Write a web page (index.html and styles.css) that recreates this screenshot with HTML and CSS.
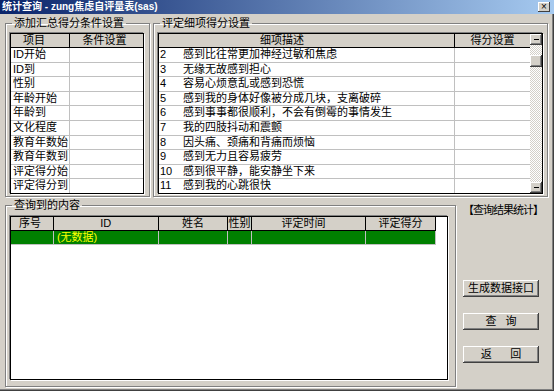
FILE: index.html
```html
<!DOCTYPE html>
<html>
<head>
  <meta charset="UTF-8">
  <link rel="stylesheet" href="styles.css">
</head>
<body>
  <div class="window">
    <div class="titlebar">
      <span class="title">统计查询 - zung焦虑自评量表(sas)</span>
      <span class="close-btn">×</span>
    </div>

    <div class="client">
      <div class="top-row">
        <!-- 汇总得分条件 -->
        <fieldset class="group group-cond">
          <legend>添加汇总得分条件设置</legend>
          <div class="frame">
            <div class="head">
              <div class="hc cond-item">项目</div>
              <div class="hc cond-set">条件设置</div>
            </div>
            <div class="row"><div class="cell cond-item">ID开始</div><div class="cell cond-set"></div></div>
            <div class="row"><div class="cell cond-item">ID到</div><div class="cell cond-set"></div></div>
            <div class="row"><div class="cell cond-item">性别</div><div class="cell cond-set"></div></div>
            <div class="row"><div class="cell cond-item">年龄开始</div><div class="cell cond-set"></div></div>
            <div class="row"><div class="cell cond-item">年龄到</div><div class="cell cond-set"></div></div>
            <div class="row"><div class="cell cond-item">文化程度</div><div class="cell cond-set"></div></div>
            <div class="row"><div class="cell cond-item">教育年数始</div><div class="cell cond-set"></div></div>
            <div class="row"><div class="cell cond-item">教育年数到</div><div class="cell cond-set"></div></div>
            <div class="row"><div class="cell cond-item">评定得分始</div><div class="cell cond-set"></div></div>
            <div class="row"><div class="cell cond-item">评定得分到</div><div class="cell cond-set"></div></div>
          </div>
        </fieldset>

        <!-- 细项得分 -->
        <fieldset class="group group-items">
          <legend>评定细项得分设置</legend>
          <div class="frame frame-items">
            <div class="items-body">
              <div class="head">
                <div class="hc item-desc">细项描述</div>
                <div class="hc item-score">得分设置</div>
              </div>
              <div class="row"><div class="cell item-desc"><span class="no">2</span>感到比往常更加神经过敏和焦虑</div><div class="cell item-score"></div></div>
              <div class="row"><div class="cell item-desc"><span class="no">3</span>无缘无故感到担心</div><div class="cell item-score"></div></div>
              <div class="row"><div class="cell item-desc"><span class="no">4</span>容易心烦意乱或感到恐慌</div><div class="cell item-score"></div></div>
              <div class="row"><div class="cell item-desc"><span class="no">5</span>感到我的身体好像被分成几块，支离破碎</div><div class="cell item-score"></div></div>
              <div class="row"><div class="cell item-desc"><span class="no">6</span>感到事事都很顺利，不会有倒霉的事情发生</div><div class="cell item-score"></div></div>
              <div class="row"><div class="cell item-desc"><span class="no">7</span>我的四肢抖动和震颤</div><div class="cell item-score"></div></div>
              <div class="row"><div class="cell item-desc"><span class="no">8</span>因头痛、颈痛和背痛而烦恼</div><div class="cell item-score"></div></div>
              <div class="row"><div class="cell item-desc"><span class="no">9</span>感到无力且容易疲劳</div><div class="cell item-score"></div></div>
              <div class="row"><div class="cell item-desc"><span class="no">10</span>感到很平静，能安静坐下来</div><div class="cell item-score"></div></div>
              <div class="row"><div class="cell item-desc"><span class="no">11</span>感到我的心跳很快</div><div class="cell item-score"></div></div>
            </div>
            <div class="vscroll">
              <div class="sb-btn"><span class="sb-mark"></span></div>
              <div class="sb-track"><div class="sb-thumb"></div></div>
              <div class="sb-btn"><span class="sb-mark"></span></div>
            </div>
          </div>
        </fieldset>
      </div>

      <div class="bottom-row">
        <!-- 查询结果 -->
        <fieldset class="group group-result">
          <legend>查询到的内容</legend>
          <div class="frame frame-result">
            <div class="head">
              <div class="hc r-no">序号</div>
              <div class="hc r-id">ID</div>
              <div class="hc r-name">姓名</div>
              <div class="hc r-sex">性别</div>
              <div class="hc r-time">评定时间</div>
              <div class="hc r-score">评定得分</div>
            </div>
            <div class="row row-empty">
              <div class="cell r-no"></div>
              <div class="cell r-id">(无数据)</div>
              <div class="cell r-name"></div>
              <div class="cell r-sex"></div>
              <div class="cell r-time"></div>
              <div class="cell r-score"></div>
            </div>
          </div>
        </fieldset>

        <div class="side">
          <div class="side-title">【查询结果统计】</div>
          <div class="side-buttons">
            <button class="btn">生成数据接口</button>
            <button class="btn">查&nbsp;&nbsp;&nbsp;询</button>
            <button class="btn">返&nbsp;&nbsp;&nbsp;&nbsp;&nbsp;&nbsp;回</button>
          </div>
        </div>
      </div>
    </div>
  </div>
</body>
</html>
```

FILE: styles.css
```css
/* 经典 Windows 窗口配色 */
:root {
  --face: #d4d0c8;
  --shadow: #808080;
  --dark: #404040;
  --grid: #c0c0c0;
}

body {
  margin: 0;
  background: var(--face);
  font-family: "Liberation Sans", "Noto Sans CJK SC", sans-serif;
  font-size: 11px;
  color: #000;
}

.window {
  width: 554px;
  height: 391px;
  background: var(--face);
  box-sizing: border-box;
  box-shadow: inset -1px -1px 0 var(--dark), inset -2px -2px 0 var(--shadow);
  overflow: hidden;
}

.titlebar {
  height: 14px;
  display: flex;
  align-items: center;
  justify-content: space-between;
  padding: 0 4px 0 2px;
  background: linear-gradient(to right, #0a246a, #a6caf0);
}

.title {
  color: #fff;
  font-size: 10px;
  font-weight: bold;
  line-height: 14px;
  white-space: nowrap;
}

.close-btn {
  width: 12px;
  height: 10px;
  display: flex;
  align-items: center;
  justify-content: center;
  background: var(--face);
  font-size: 10px;
  line-height: 10px;
  box-shadow: inset -1px -1px 0 var(--dark), inset 1px 1px 0 #fff;
}

.client {
  padding: 2px 6px 0 5px;
}

.top-row {
  display: flex;
  gap: 3px;
  height: 181px;
}

.bottom-row {
  display: flex;
  margin-top: 1px;
}

/* 分组框 */
.group {
  margin: 0;
  min-width: 0;
  box-sizing: border-box;
  border: 1px solid var(--shadow);
  box-shadow: 1px 1px 0 #fff, inset 1px 1px 0 #fff;
}

.group legend {
  margin-left: 2px;
  padding: 0 2px;
  line-height: 14px;
  font-size: 11px;
}

.group-cond {
  width: 145px;
  height: 181px;
  padding: 3px 5px 2px 4px;
}

.group-items {
  width: 395px;
  height: 181px;
  padding: 3px 4px 2px 4px;
}

.group-result {
  width: 451px;
  height: 189px;
  padding: 4px 7px 6px 4px;
}

/* 表格外框（凹陷） */
.frame {
  border: 1px solid #000;
  background: #fff;
  height: 161px;
  box-sizing: border-box;
  box-shadow: -1px -1px 0 var(--shadow), 1px 1px 0 #fff;
  overflow: hidden;
}

.frame-items {
  display: flex;
}

.frame-result {
  height: 164px;
}

.items-body {
  width: 371px;
}

.head {
  display: flex;
  height: 13px;
  border-bottom: 1px solid #000;
}

.hc {
  background: var(--face);
  line-height: 13px;
  box-sizing: border-box;
  border-right: 1px solid #000;
  white-space: nowrap;
  overflow: hidden;
}

.hc:last-child {
  border-right: none;
}

.row {
  display: flex;
  height: 14.6px;
}

.cell {
  box-sizing: border-box;
  border-right: 1px solid var(--grid);
  border-bottom: 1px solid var(--grid);
  line-height: 13.6px;
  white-space: nowrap;
  overflow: hidden;
}

.cell:last-child {
  border-right: none;
}

/* 条件设置列 */
.cond-item {
  width: 59px;
  padding-left: 2px;
}

.hc.cond-item {
  padding-left: 12px;
}

.cond-set {
  flex: 1;
}

.hc.cond-set {
  text-align: center;
  padding-right: 4px;
}

/* 细项列 */
.item-desc {
  width: 296px;
  padding-left: 1px;
}

.hc.item-desc {
  padding-left: 101px;
}

.item-score {
  flex: 1;
}

.hc.item-score {
  text-align: center;
}

.no {
  display: inline-block;
  width: 23px;
}

/* 滚动条 */
.vscroll {
  width: 12px;
  display: flex;
  flex-direction: column;
  background: repeating-conic-gradient(#fff 0 25%, var(--face) 0 50%) 0 0 / 2px 2px;
}

.sb-btn {
  height: 11px;
  display: flex;
  align-items: center;
  justify-content: center;
  background: var(--face);
  box-shadow: inset -1px -1px 0 var(--dark), inset 1px 1px 0 #fff, inset -2px -2px 0 var(--shadow);
}

.sb-mark {
  width: 5px;
  height: 1px;
  background: #000;
}

.sb-track {
  flex: 1;
  padding-top: 10px;
}

.sb-thumb {
  height: 12px;
  background: var(--face);
  box-shadow: inset -1px -1px 0 var(--dark), inset 1px 1px 0 #fff, inset -2px -2px 0 var(--shadow);
}

/* 查询结果列 */
.frame-result .head {
  width: 425px;
  height: 13px;
}

.frame-result .hc {
  height: 13px;
}

.frame-result .row {
  height: 14px;
  width: 425px;
}

.r-no { width: 43px; }
.r-id { width: 105px; }
.r-name { width: 70px; }
.r-sex { width: 24px; }
.r-time { width: 114px; }
.r-score { width: 69px; }

.hc.r-no { padding-left: 8px; }
.hc.r-id, .hc.r-name, .hc.r-score { text-align: center; }
.hc.r-sex { padding-left: 0; }
.hc.r-time { padding-left: 29px; }
.hc.r-score { border-right: 1px solid #000; width: 70px; }

.row-empty .cell {
  background: #008000;
  color: #ffff00;
  line-height: 13px;
}

.row-empty .r-id {
  padding-left: 3px;
}

.row-empty .r-score {
  width: 70px;
  border-right: 1px solid var(--grid);
}

/* 右侧按钮区 */
.side {
  width: 76px;
  margin-left: 7px;
  padding-top: 5px;
}

.side-title {
  line-height: 14px;
  white-space: nowrap;
  letter-spacing: -1px;
}

.side-buttons {
  display: flex;
  flex-direction: column;
  gap: 16px;
  margin-top: 63px;
}

.btn {
  height: 17px;
  padding: 0;
  border: none;
  background: var(--face);
  font-family: inherit;
  font-size: 11px;
  line-height: 17px;
  color: #000;
  box-shadow: inset -1px -1px 0 var(--dark), inset 1px 1px 0 #fff, inset -2px -2px 0 var(--shadow);
}
```
